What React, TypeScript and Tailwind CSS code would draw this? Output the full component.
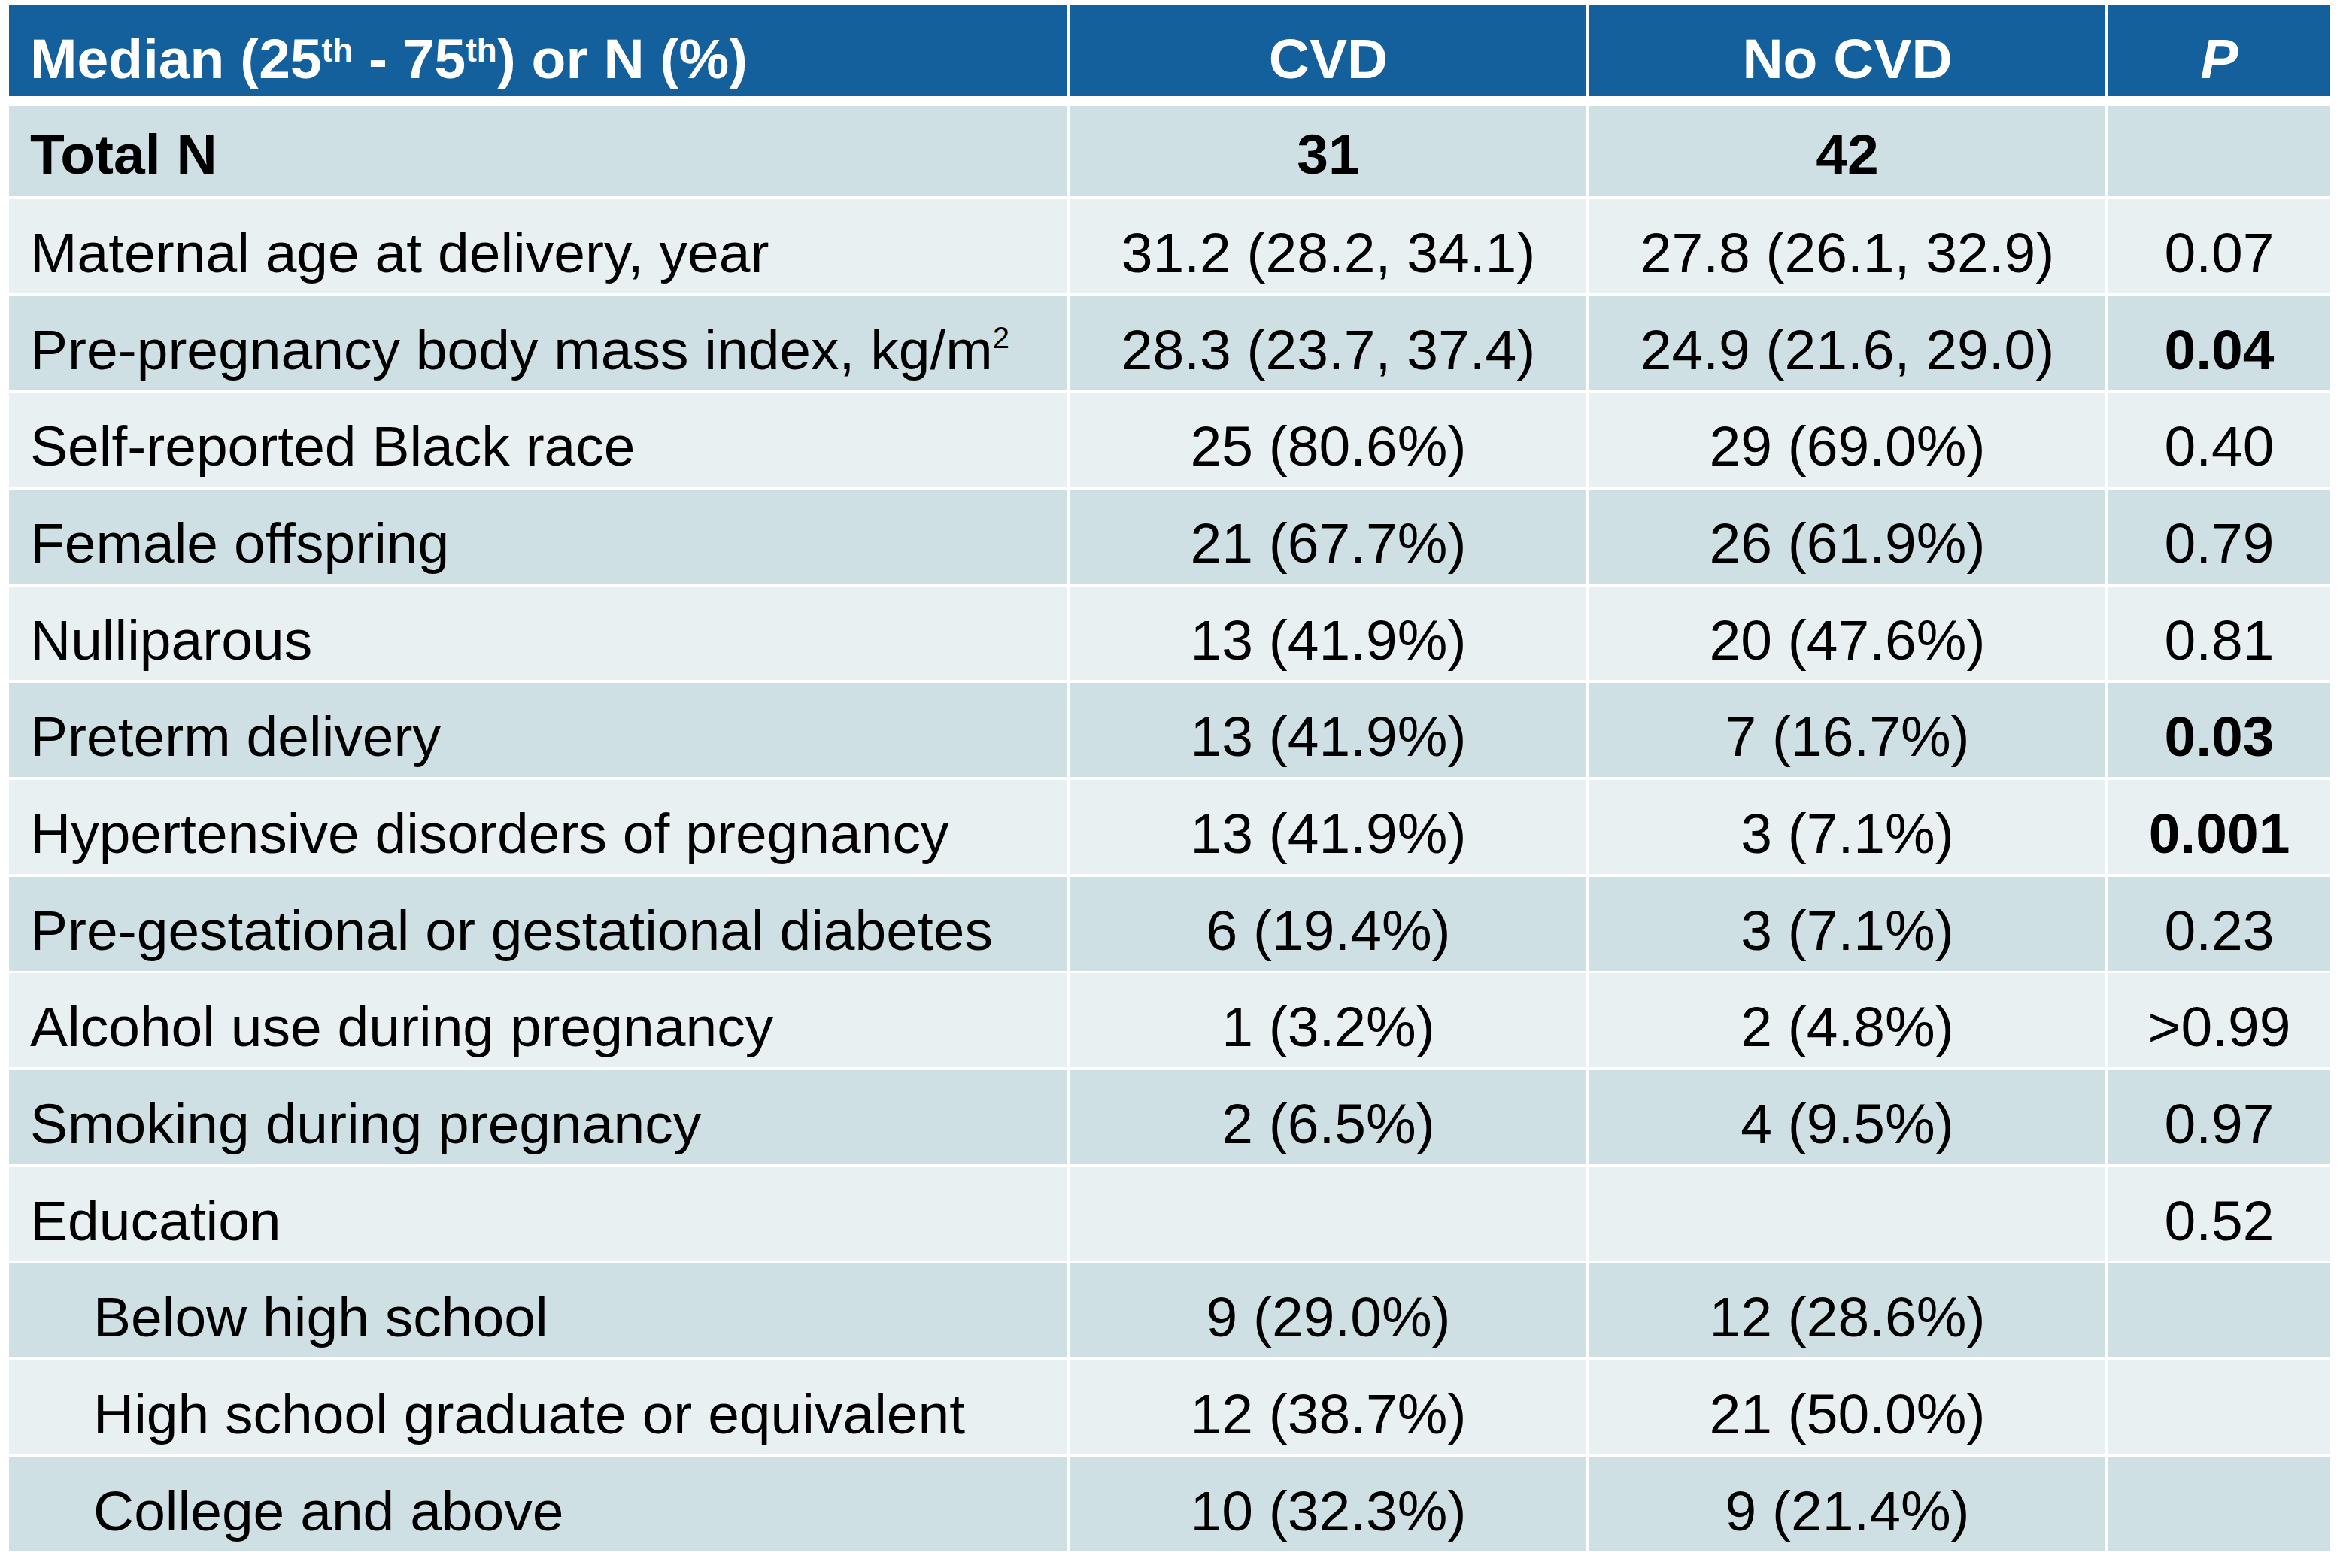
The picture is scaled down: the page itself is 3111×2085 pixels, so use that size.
type Row = {
  label: React.ReactNode
  cvd: string
  noCvd: string
  p: string
  boldP?: boolean
  boldRow?: boolean
  indent?: boolean
}

const ROWS: Row[] = [
  { label: 'Total N', cvd: '31', noCvd: '42', p: '', boldRow: true },
  { label: 'Maternal age at delivery, year', cvd: '31.2 (28.2, 34.1)', noCvd: '27.8 (26.1, 32.9)', p: '0.07' },
  {
    label: <>Pre-pregnancy body mass index, kg/m<sup className="top-[-28px] text-[40px]">2</sup></>,
    cvd: '28.3 (23.7, 37.4)', noCvd: '24.9 (21.6, 29.0)', p: '0.04', boldP: true,
  },
  { label: 'Self-reported Black race', cvd: '25 (80.6%)', noCvd: '29 (69.0%)', p: '0.40' },
  { label: 'Female offspring', cvd: '21 (67.7%)', noCvd: '26 (61.9%)', p: '0.79' },
  { label: 'Nulliparous', cvd: '13 (41.9%)', noCvd: '20 (47.6%)', p: '0.81' },
  { label: 'Preterm delivery', cvd: '13 (41.9%)', noCvd: '7 (16.7%)', p: '0.03', boldP: true },
  { label: 'Hypertensive disorders of pregnancy', cvd: '13 (41.9%)', noCvd: '3 (7.1%)', p: '0.001', boldP: true },
  { label: 'Pre-gestational or gestational diabetes', cvd: '6 (19.4%)', noCvd: '3 (7.1%)', p: '0.23' },
  { label: 'Alcohol use during pregnancy', cvd: '1 (3.2%)', noCvd: '2 (4.8%)', p: '>0.99' },
  { label: 'Smoking during pregnancy', cvd: '2 (6.5%)', noCvd: '4 (9.5%)', p: '0.97' },
  { label: 'Education', cvd: '', noCvd: '', p: '0.52' },
  { label: 'Below high school', cvd: '9 (29.0%)', noCvd: '12 (28.6%)', p: '', indent: true },
  { label: 'High school graduate or equivalent', cvd: '12 (38.7%)', noCvd: '21 (50.0%)', p: '', indent: true },
  { label: 'College and above', cvd: '10 (32.3%)', noCvd: '9 (21.4%)', p: '', indent: true },
]

const COLS = 'grid w-[3086px] grid-cols-[1407px_686px_686px_295px] gap-x-[4px]'

export default function App() {
  return (
    <div className="min-h-screen bg-white pl-[12px] pt-[7px] font-['Liberation_Sans',Arial,sans-serif] text-[75px] leading-none text-black">
      {/* header */}
      <div className={COLS}>
        <div className="h-[121px] whitespace-nowrap bg-[#14609d] pl-[28px] pt-[34px] font-bold text-white">
          Median (25<sup className="text-[44px]">th</sup> - 75<sup className="text-[44px]">th</sup>) or N (%)
        </div>
        <div className="h-[121px] bg-[#14609d] pt-[34px] text-center font-bold text-white">CVD</div>
        <div className="h-[121px] bg-[#14609d] pt-[34px] text-center font-bold text-white">No CVD</div>
        <div className="h-[121px] bg-[#14609d] pt-[34px] text-center font-bold italic text-white">P</div>
      </div>

      {/* body */}
      <div className={`${COLS} mt-[13px] grid-rows-[120px_repeat(14,124.8px)] gap-y-[3.9px]`}>
        {ROWS.map((r, i) => {
          const bg = i % 2 === 0 ? 'bg-[#cfe0e5]' : 'bg-[#e8f0f2]'
          const weight = r.boldRow ? 'font-bold' : ''
          const pt = i === 0 ? 'pt-[27px]' : 'pt-[34px]'
          return (
            <div key={i} className="contents">
              <div className={`whitespace-nowrap ${pt} ${r.indent ? 'pl-[112px]' : 'pl-[28px]'} ${bg} ${weight}`}>
                {r.label}
              </div>
              <div className={`text-center ${pt} ${bg} ${weight}`}>{r.cvd}</div>
              <div className={`text-center ${pt} ${bg} ${weight}`}>{r.noCvd}</div>
              <div className={`text-center ${pt} ${bg} ${r.boldP ? 'font-bold' : ''}`}>{r.p}</div>
            </div>
          )
        })}
      </div>
    </div>
  )
}
